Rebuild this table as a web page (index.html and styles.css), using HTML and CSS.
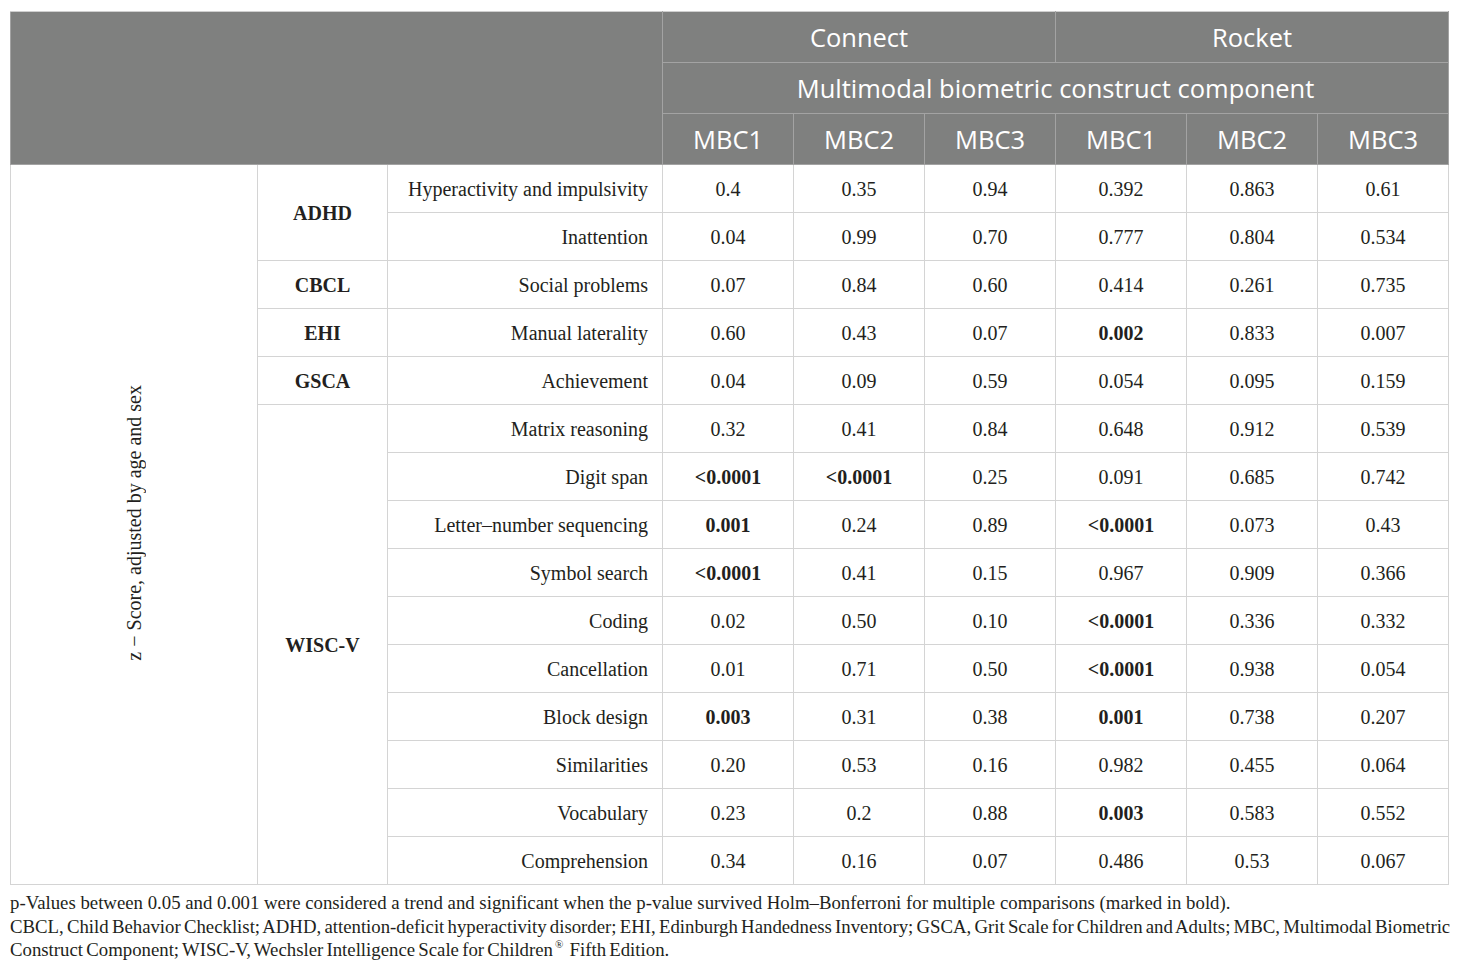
FILE: index.html
```html
<!DOCTYPE html>
<html lang="en">
<head>
<meta charset="utf-8">
<title>Table</title>
<link rel="stylesheet" href="styles.css">
</head>
<body>
<div class="page">
<table class="data">
  <colgroup>
    <col class="c-side"><col class="c-group"><col class="c-label">
    <col class="c-val"><col class="c-val"><col class="c-val">
    <col class="c-val"><col class="c-val"><col class="c-val">
  </colgroup>
  <thead>
    <tr>
      <th rowspan="3" colspan="3" class="blank"></th>
      <th colspan="3">Connect</th>
      <th colspan="3">Rocket</th>
    </tr>
    <tr>
      <th colspan="6">Multimodal biometric construct component</th>
    </tr>
    <tr>
      <th>MBC1</th><th>MBC2</th><th>MBC3</th>
      <th>MBC1</th><th>MBC2</th><th>MBC3</th>
    </tr>
  </thead>
  <tbody>
    <tr>
      <td rowspan="15" class="side"><span class="vert">z − Score, adjusted by age and sex</span></td>
      <td rowspan="2" class="group">ADHD</td>
      <td class="label">Hyperactivity and impulsivity</td>
      <td>0.4</td><td>0.35</td><td>0.94</td><td>0.392</td><td>0.863</td><td>0.61</td>
    </tr>
    <tr>
      <td class="label">Inattention</td>
      <td>0.04</td><td>0.99</td><td>0.70</td><td>0.777</td><td>0.804</td><td>0.534</td>
    </tr>
    <tr>
      <td class="group">CBCL</td>
      <td class="label">Social problems</td>
      <td>0.07</td><td>0.84</td><td>0.60</td><td>0.414</td><td>0.261</td><td>0.735</td>
    </tr>
    <tr>
      <td class="group">EHI</td>
      <td class="label">Manual laterality</td>
      <td>0.60</td><td>0.43</td><td>0.07</td><td class="b">0.002</td><td>0.833</td><td>0.007</td>
    </tr>
    <tr>
      <td class="group">GSCA</td>
      <td class="label">Achievement</td>
      <td>0.04</td><td>0.09</td><td>0.59</td><td>0.054</td><td>0.095</td><td>0.159</td>
    </tr>
    <tr>
      <td rowspan="10" class="group">WISC-V</td>
      <td class="label">Matrix reasoning</td>
      <td>0.32</td><td>0.41</td><td>0.84</td><td>0.648</td><td>0.912</td><td>0.539</td>
    </tr>
    <tr>
      <td class="label">Digit span</td>
      <td class="b">&lt;0.0001</td><td class="b">&lt;0.0001</td><td>0.25</td><td>0.091</td><td>0.685</td><td>0.742</td>
    </tr>
    <tr>
      <td class="label">Letter–number sequencing</td>
      <td class="b">0.001</td><td>0.24</td><td>0.89</td><td class="b">&lt;0.0001</td><td>0.073</td><td>0.43</td>
    </tr>
    <tr>
      <td class="label">Symbol search</td>
      <td class="b">&lt;0.0001</td><td>0.41</td><td>0.15</td><td>0.967</td><td>0.909</td><td>0.366</td>
    </tr>
    <tr>
      <td class="label">Coding</td>
      <td>0.02</td><td>0.50</td><td>0.10</td><td class="b">&lt;0.0001</td><td>0.336</td><td>0.332</td>
    </tr>
    <tr>
      <td class="label">Cancellation</td>
      <td>0.01</td><td>0.71</td><td>0.50</td><td class="b">&lt;0.0001</td><td>0.938</td><td>0.054</td>
    </tr>
    <tr>
      <td class="label">Block design</td>
      <td class="b">0.003</td><td>0.31</td><td>0.38</td><td class="b">0.001</td><td>0.738</td><td>0.207</td>
    </tr>
    <tr>
      <td class="label">Similarities</td>
      <td>0.20</td><td>0.53</td><td>0.16</td><td>0.982</td><td>0.455</td><td>0.064</td>
    </tr>
    <tr>
      <td class="label">Vocabulary</td>
      <td>0.23</td><td>0.2</td><td>0.88</td><td class="b">0.003</td><td>0.583</td><td>0.552</td>
    </tr>
    <tr>
      <td class="label">Comprehension</td>
      <td>0.34</td><td>0.16</td><td>0.07</td><td>0.486</td><td>0.53</td><td>0.067</td>
    </tr>
  </tbody>
</table>
<div class="notes">
  <p>p-Values between 0.05 and 0.001 were considered a trend and significant when the p-value survived Holm–Bonferroni for multiple comparisons (marked in bold).</p>
  <p class="tight">CBCL, Child Behavior Checklist; ADHD, attention-deficit hyperactivity disorder; EHI, Edinburgh Handedness Inventory; GSCA, Grit Scale for Children and Adults; MBC, Multimodal Biometric Construct Component; WISC-V, Wechsler Intelligence Scale for Children<sup class="reg">®</sup> Fifth Edition.</p>
</div>
</div>
</body>
</html>
```

FILE: styles.css
```css
html, body {
  margin: 0;
  padding: 0;
  background: #ffffff;
}

.page {
  padding: 11px 12px 0 10px;
  font-family: "Liberation Serif", "Times New Roman", serif;
  color: #231f20;
}

.data {
  width: 1438px;
  border-collapse: collapse;
  table-layout: fixed;
  border: 1px solid #cfcfcf;
}

.c-side { width: 247px; }
.c-group { width: 130px; }
.c-label { width: 275px; }
.c-val { width: 131px; }

.data th {
  background: #7f807f;
  color: #ffffff;
  font-family: "Open Sans", "Noto Sans", sans-serif;
  font-weight: 400;
  font-size: 25.5px;
  line-height: 30px;
  height: 50px;
  padding: 0;
  text-align: center;
  border: 1px solid #a3a3a3;
}

.data thead tr:first-child th {
  border-top-color: #cfcfcf;
}

.data td {
  height: 47px;
  padding: 0;
  border: 1px solid #d4d4d4;
  text-align: center;
  font-size: 20px;
  line-height: 22px;
}

.data td.label {
  text-align: right;
  padding-right: 14px;
}

.data td.group {
  font-weight: 700;
}

.data td.b {
  font-weight: 700;
}

.data td.side {
  text-align: center;
  vertical-align: middle;
}

.vert {
  display: inline-block;
  writing-mode: vertical-rl;
  transform: rotate(180deg);
  font-size: 20px;
}

.notes {
  margin-top: 6px;
  margin-right: -4px;
  font-size: 18.8px;
  line-height: 23.5px;
  color: #231f20;
}

.notes p {
  margin: 0;
}

.notes .tight {
  word-spacing: -1.5px;
}

.notes .reg {
  display: inline-block;
  font-size: 11px;
  line-height: 11px;
  vertical-align: top;
  margin: 1px 3px 0 2px;
}
```
